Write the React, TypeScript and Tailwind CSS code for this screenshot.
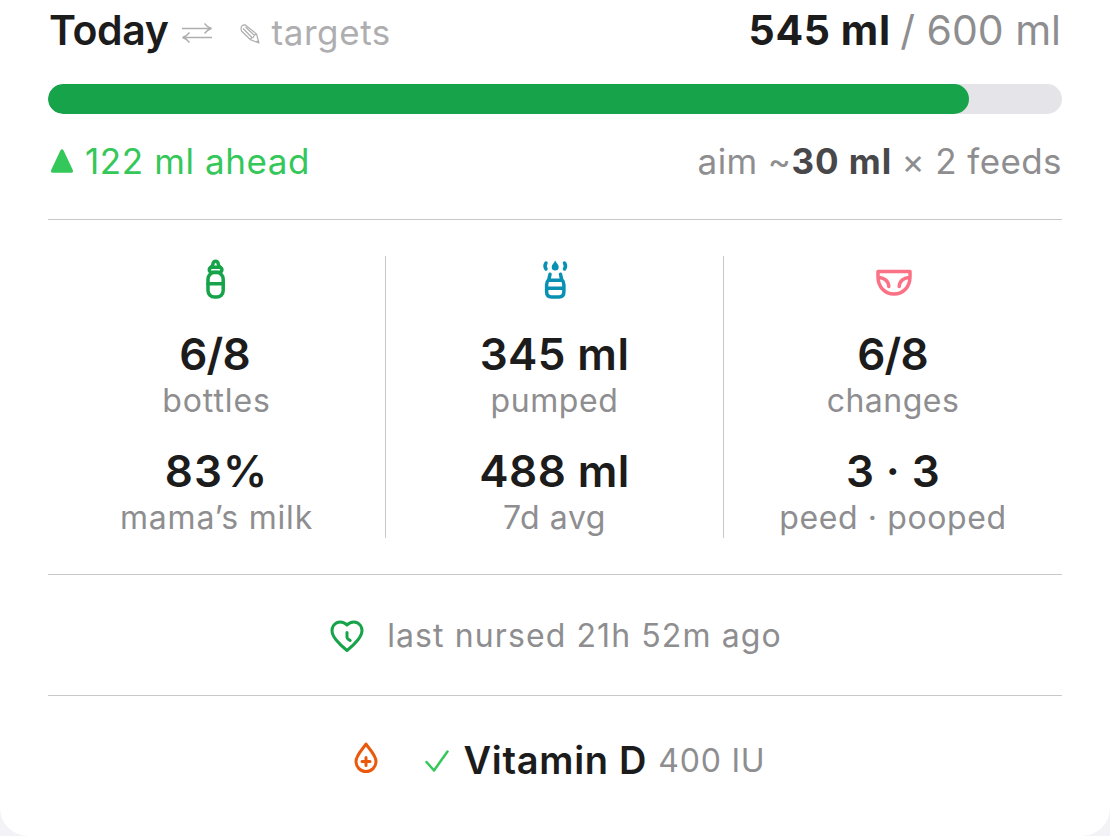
import type { ReactNode } from 'react';

type Stat = { value: string; valueClass: string; label: string; labelClass: string };

const STATS: { id: string; icon: ReactNode; rows: Stat[] }[] = [
  {
    id: 'bottles',
    icon: <BottleIcon />,
    rows: [
      { value: '6/8', valueClass: 'tracking-[-0.8px] mr-1', label: 'bottles', labelClass: 'tracking-[0.9px]' },
      { value: '83%', valueClass: 'tracking-[1px]', label: 'mama’s milk', labelClass: 'tracking-[0.8px]' },
    ],
  },
  {
    id: 'pumped',
    icon: <PumpIcon />,
    rows: [
      { value: '345 ml', valueClass: 'tracking-[0.4px]', label: 'pumped', labelClass: 'tracking-[0.6px]' },
      { value: '488 ml', valueClass: 'tracking-[0.4px]', label: '7d avg', labelClass: 'tracking-[0.6px]' },
    ],
  },
  {
    id: 'changes',
    icon: <DiaperIcon />,
    rows: [
      { value: '6/8', valueClass: 'tracking-[-0.8px] mr-px', label: 'changes', labelClass: 'tracking-[0.5px]' },
      { value: '3 · 3', valueClass: 'tracking-[0.4px]', label: 'peed · pooped', labelClass: 'tracking-[0.6px]' },
    ],
  },
];

export default function App() {
  const fed = 545;
  const target = 600;

  return (
    <div className="h-[836px] w-[1110px] overflow-hidden bg-[#f2f2f7] font-['Inter',sans-serif] text-[#1c1c1c] antialiased">
      <main className="h-full rounded-b-[28px] bg-white px-12">
        <header className="flex h-[60px] items-baseline justify-between whitespace-nowrap leading-[60px]">
          <div className="flex items-baseline">
            <h1 className="ml-px text-[41px] font-semibold leading-[60px] tracking-[-0.4px]">Today</h1>
            <SwapIcon />
            <PencilIcon />
            <span className="ml-[11px] text-[35px] tracking-[0.6px] text-[#aeaeb0]">targets</span>
          </div>
          <p className="mr-px text-[41px] leading-[60px] text-[#8e8e90]">
            <span className="mr-[-2px] font-bold tracking-[0.6px] text-[#1c1c1c]">{fed} ml</span> /{' '}
            {target} ml
          </p>
        </header>

        <div className="mt-6 h-[30px] overflow-hidden rounded-full bg-[#e4e4e9]">
          <div
            className="h-full rounded-full bg-[#16a34a]"
            style={{ width: `${(fed / target) * 100}%` }}
          />
        </div>

        <div className="mt-[23px] flex h-12 items-center justify-between whitespace-nowrap text-[35px] leading-[48px]">
          <div className="flex items-center text-[#34c759]">
            <svg className="ml-0.5 h-6 w-6" viewBox="0 0 24 24" fill="currentColor">
              <path d="M10.4 1.6Q12 -1 13.6 1.6L22.7 20.8Q23.6 23.8 21 23.8H3Q.4 23.8 1.3 20.8Z" />
            </svg>
            <span className="ml-[11px] tracking-[0.6px]">122 ml ahead</span>
          </div>
          <p className="tracking-[0.4px] text-[#8e8e90]">
            aim ~<span className="mr-[-1px] font-bold tracking-[1px] text-[#48484a]">30 ml</span> × 2
            feeds
          </p>
        </div>

        <hr className="mt-[34px] border-[#c8c8c9]" />

        <section className="mt-9 grid h-[282px] grid-cols-3 divide-x divide-[#c8c8c9]">
          {STATS.map((stat) => (
            <StatColumn key={stat.id} icon={stat.icon} rows={stat.rows} />
          ))}
        </section>

        <hr className="mt-9 border-[#c8c8c9]" />

        <section className="flex h-[120px] items-center justify-center pl-0.5 text-[32px] text-[#8e8e90]">
          <HeartClockIcon />
          <span className="ml-[23px] pt-0.5 tracking-[1.1px]">last nursed 21h 52m ago</span>
        </section>

        <hr className="border-[#c8c8c9]" />

        <section className="flex h-[128px] items-center justify-center pl-2.5">
          <DropIcon />
          <CheckIcon />
          <span className="ml-3.5 text-[38px] font-semibold tracking-[0.7px]">Vitamin D</span>
          <span className="ml-[11px] mt-0.5 text-[32px] tracking-[0.8px] text-[#8e8e90]">400 IU</span>
        </section>
      </main>
    </div>
  );
}

function StatColumn({ icon, rows }: { icon: ReactNode; rows: Stat[] }) {
  return (
    <div className="flex flex-col items-center">
      <div className="flex h-12 items-center">{icon}</div>
      {rows.map((row) => (
        <div key={row.label} className="mt-6 whitespace-nowrap text-center">
          <p className={`text-[44px] font-semibold leading-[52px] ${row.valueClass}`}>{row.value}</p>
          <p className={`mt-px text-[32px] leading-[40px] text-[#8e8e90] ${row.labelClass}`}>
            {row.label}
          </p>
        </div>
      ))}
    </div>
  );
}

function SwapIcon() {
  return (
    <svg
      className="ml-[13px] h-[22px] w-8"
      viewBox="0 0 32 22"
      fill="none"
      stroke="#aeaeb0"
      strokeWidth="1.3"
    >
      <path d="M1 5.500h29M23.500 .5q3 4 7 5q-4 1-7 5M31 14.500H2M8.500 9.500q-3 4-7 5q4 1 7 5" />
    </svg>
  );
}

function PencilIcon() {
  return (
    <svg
      className="ml-[27px] h-[21px] w-5"
      viewBox="0 0 20 21"
      fill="none"
      stroke="#aeaeb0"
      strokeWidth="1.2"
      strokeLinejoin="round"
    >
      <path d="M1 4.500Q1 1 5 .8L16.500 10 19 19 10.500 15.800 1.500 7ZM10.500 15.800Q11 13.500 13.200 13.500Q13.500 11 16.500 10M3 4.500L12 13.500M5.500 3L14.500 11.500M16 18L18.500 16.500" />
    </svg>
  );
}

function BottleIcon() {
  return (
    <svg
      className="mr-px h-12 w-12"
      viewBox="0 0 48 48"
      fill="none"
      stroke="#16a34a"
      strokeWidth="3.5"
      strokeLinecap="round"
      strokeLinejoin="round"
    >
      <path d="M18.800 11.500Q21 10 21 7.800a2.600 2.600 0 0 1 5.200 0Q26.200 10 28.400 11.500" />
      <rect x="17.300" y="11.300" width="12.600" height="5" rx="2.400" />
      <rect x="16" y="16.500" width="15.200" height="24.600" rx="6.500" />
      <path d="M16 27.800H31.200" />
    </svg>
  );
}

function PumpIcon() {
  return (
    <svg
      className="h-12 w-12"
      viewBox="0 0 48 48"
      fill="none"
      stroke="#0891b2"
      strokeWidth="3.5"
      strokeLinecap="round"
      strokeLinejoin="round"
    >
      <path d="M19 18.300L17.800 23.500Q15.600 25.500 15.600 29V35.500Q15.600 41 20.500 41H28Q32.900 41 32.900 35.500V29Q32.900 25.500 30.700 23.500L29.500 18.300M18 24.300H30.500M15.600 32.300H32.900" />
      <path d="M15 7Q13 10 15 13M33.500 7Q35.500 10 33.500 13" />
      <path
        d="M24.200 4.500C25.200 7 27.700 8.500 27.700 11A3.500 3.500 0 0 1 20.700 11C20.700 8.500 23.200 7 24.200 4.500Z"
        fill="#0891b2"
        stroke="none"
      />
    </svg>
  );
}

function DiaperIcon() {
  return (
    <svg
      className="ml-0.5 h-12 w-12"
      viewBox="0 0 48 48"
      fill="none"
      stroke="#fb7185"
      strokeWidth="3.5"
      strokeLinecap="round"
      strokeLinejoin="round"
    >
      <path d="M8 15.500H40V21C40 31 33 38 24 38S8 31 8 21ZM8.500 21.500C14 21.500 18.500 25 18.800 30.500M39.500 21.500C34 21.500 29.500 25 29.200 30.500" />
    </svg>
  );
}

function HeartClockIcon() {
  return (
    <svg
      className="mt-0.5 h-[34px] w-[34px]"
      viewBox="0 0 34 34"
      fill="none"
      stroke="#16a34a"
      strokeWidth="3"
      strokeLinecap="round"
      strokeLinejoin="round"
    >
      <path d="M17 31.500Q10.500 26.500 6 20.800C2 15.800 1 10.500 3.500 6.500C7 1.500 13.500 2 17 6C20.500 2 27 1.500 30.500 6.500C33 10.500 32 15.800 28 20.800Q23.500 26.500 17 31.500Z" />
      <path d="M17 13.500v4.500q0 1.200 1 2l2.200 1.500" />
    </svg>
  );
}

function DropIcon() {
  return (
    <svg
      className="-mt-1 h-8 w-6"
      viewBox="0 0 24 32"
      fill="none"
      stroke="#ea580c"
      strokeWidth="3"
      strokeLinecap="round"
      strokeLinejoin="round"
    >
      <path d="M12 2C9 7 2 13 2 19.500a10 10 0 0 0 20 0C22 13 15 7 12 2ZM12 15.500v8M8 19.500h8" />
    </svg>
  );
}

function CheckIcon() {
  return (
    <svg
      className="ml-[47px] mt-0.5 h-6 w-6"
      viewBox="0 0 24 24"
      fill="none"
      stroke="#34c759"
      strokeWidth="2.5"
      strokeLinecap="round"
      strokeLinejoin="round"
    >
      <path d="M1.500 13L9 21.500 22.500 2.500" />
    </svg>
  );
}
